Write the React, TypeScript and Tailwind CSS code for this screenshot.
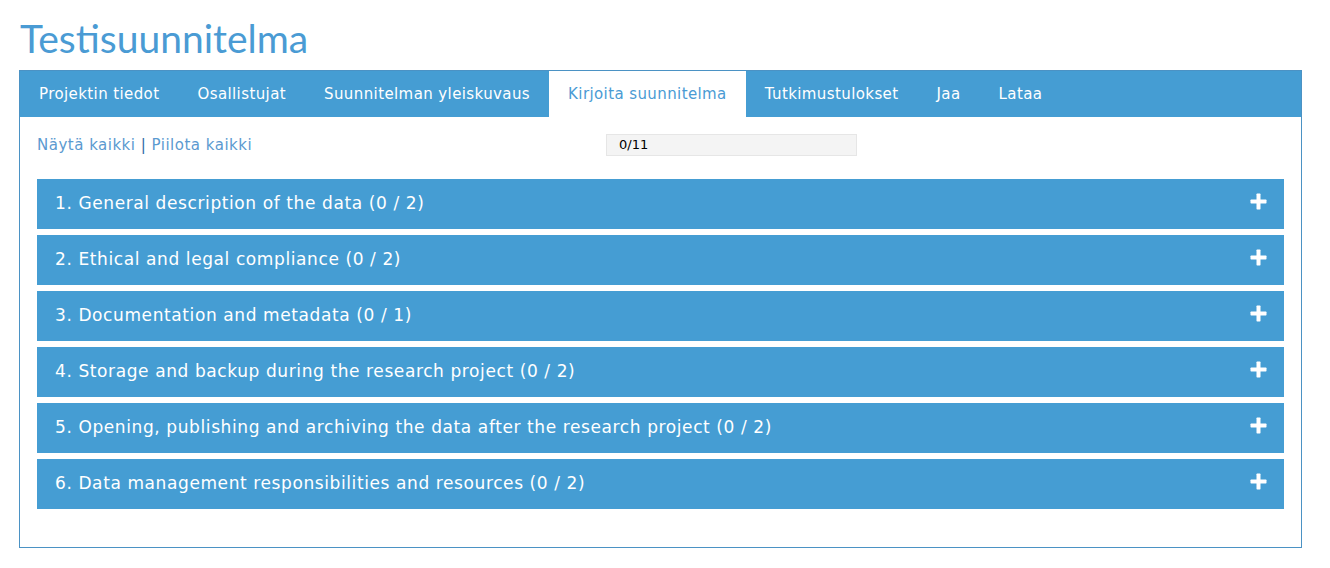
import React from 'react';

const tabs = [
  'Projektin tiedot',
  'Osallistujat',
  'Suunnitelman yleiskuvaus',
  'Kirjoita suunnitelma',
  'Tutkimustulokset',
  'Jaa',
  'Lataa',
];

const sections = [
  '1. General description of the data (0 / 2)',
  '2. Ethical and legal compliance (0 / 2)',
  '3. Documentation and metadata (0 / 1)',
  '4. Storage and backup during the research project (0 / 2)',
  '5. Opening, publishing and archiving the data after the research project (0 / 2)',
  '6. Data management responsibilities and resources (0 / 2)',
];

const Plus = () => (
  <svg className="w-[17px] h-[17px] mb-[6px]" viewBox="0 0 17 17" fill="white">
    <rect x="6.5" y="0.5" width="4" height="16" rx="0.7" />
    <rect x="0.5" y="6.5" width="16" height="4" rx="0.7" />
  </svg>
);

export default function App() {
  return (
    <div className="bg-white min-h-screen px-[19px] pt-[14px] font-['DejaVu_Sans',Verdana,sans-serif]">
      <h1 className="text-[39px] leading-[48px] text-[#4a9bd4] font-['Lato',sans-serif] pl-px mb-[8px]">
        Testisuunnitelma
      </h1>
      <div className="w-[1283px] border border-[#4b92c4]">
        <div className="flex bg-[#459dd3] h-[46px] items-end">
          {tabs.map((t, i) => {
            const active = t === 'Kirjoita suunnitelma';
            return (
              <div
                key={i}
                className={`h-[46px] flex items-center px-[19px] text-[15px] tracking-[0.4px] ${
                  active ? 'bg-white text-[#4a9bd4]' : 'text-white'
                }`}
              >
                {t}
              </div>
            );
          })}
        </div>
        <div className="px-[17px] pt-[16px] pb-[38px]">
          <div className="flex items-center h-[24px] text-[15px]">
            <div className="w-[569px] text-[#5b9ad0] tracking-[0.5px]">
              Näytä kaikki <span className="text-[#2f6aa6]">|</span> Piilota kaikki
            </div>
            <div className="w-[251px] h-[22px] bg-[#f4f4f4] border border-[#e6e6e6] text-[13px] text-black pl-[12px] flex items-center">
              0/11
            </div>
          </div>
          <div className="mt-[22px] flex flex-col gap-[6px]">
            {sections.map((s, i) => (
              <div
                key={i}
                className="h-[50px] bg-[#459dd3] flex items-center justify-between pl-[18px] pr-[17px] text-white text-[17px] tracking-[0.6px]"
              >
                <span>{s}</span>
                <Plus />
              </div>
            ))}
          </div>
        </div>
      </div>
    </div>
  );
}
